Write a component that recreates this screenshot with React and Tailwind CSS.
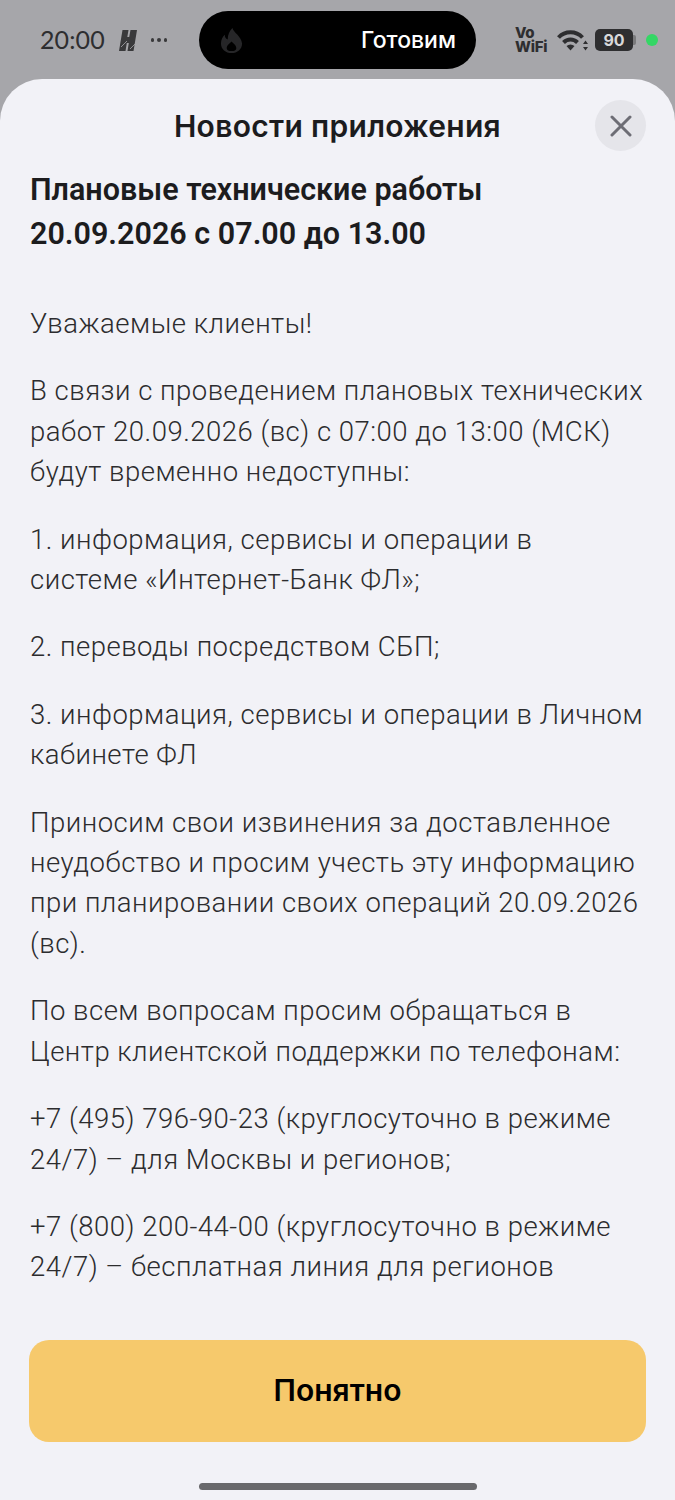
const paragraphs = [
  ["В связи с проведением плановых технических", "работ 20.09.2026 (вс) с 07:00 до 13:00 (МСК)", "будут временно недоступны:"],
  ["1. информация, сервисы и операции в", "системе «Интернет-Банк ФЛ»;"],
  ["2. переводы посредством СБП;"],
  ["3. информация, сервисы и операции в Личном", "кабинете ФЛ"],
  ["Приносим свои извинения за доставленное", "неудобство и просим учесть эту информацию", "при планировании своих операций 20.09.2026", "(вс)."],
  ["По всем вопросам просим обращаться в", "Центр клиентской поддержки по телефонам:"],
  ["+7 (495) 796-90-23 (круглосуточно в режиме", "24/7) – для Москвы и регионов;"],
  ["+7 (800) 200-44-00 (круглосуточно в режиме", "24/7) – бесплатная линия для регионов"],
];

function StatusBar() {
  return (
    <div className="h-[79px] flex items-start pt-[11px] pl-[40px] text-[#2e2e30]">
      <div className="flex items-center h-[58px] w-[159px]">
        <span className="text-[25px] font-normal tracking-[0.1px]" style={{ fontFamily: "Lato, sans-serif" }}>20:00</span>
        <svg width="18" height="21" viewBox="0 0 18 21" className="ml-[14px]">
          <path d="M3.500 0H9.500L8.300 7h1.900L11.500 0H18l-3.500 21H8.500l1.300-8H7.800L6.500 21H0z" fill="#39393b" />
          <path d="M2 17L8 11M11 19L16 14" stroke="#a6a6aa" strokeWidth="0.8" />
        </svg>
        <span className="ml-[14px] flex gap-[3px]">
          <span className="w-[3.500px] h-[3.500px] rounded-full bg-[#39393b]" />
          <span className="w-[3.500px] h-[3.500px] rounded-full bg-[#39393b]" />
          <span className="w-[3.500px] h-[3.500px] rounded-full bg-[#39393b]" />
        </span>
      </div>
      <div className="w-[277px] h-[58px] bg-black rounded-full flex items-center justify-between pl-[21px] pr-[20px]">
        <svg width="24" height="27" viewBox="0 0 25 28">
          <path d="M13 1c1 5 9 8 10 16 0 6-5 10-11 10S1 23 1 17c0-4 2-7 4-9 0 3 1 4 3 5 0-5 2-9 5-12zm-1 14c-2 2-5 4-5 7 0 2 2 3 5 3s5-1 5-3c0-3-3-5-5-7z" fill="#262628" fillRule="evenodd" />
        </svg>
        <span className="text-white text-[23px] font-medium" style={{ fontFamily: "Inter, sans-serif" }}>Готовим</span>
      </div>
      <div className="flex items-center h-[58px] ml-[39px]" style={{ fontFamily: "Inter, sans-serif" }}>
        <div className="text-[#2e2e30] text-[15px] leading-[14px] font-extrabold tracking-[-0.2px] w-[35px]">
          <div>Vo</div>
          <div>WiFi</div>
        </div>
        <svg width="32" height="23" viewBox="0 0 32 23" className="ml-[7px]">
          <path d="M1.500 8.500C8 1.500 19 1.500 25.500 8.500" fill="none" stroke="#2e2e30" strokeWidth="4" />
          <path d="M6.500 13.500C10.500 9.500 16.500 9.500 20.500 13.500" fill="none" stroke="#2e2e30" strokeWidth="4" />
          <path d="M9.500 17C12 15 15 15 17.500 17L13.500 21.500z" fill="#2e2e30" />
          <path d="M28.500 11.500l2.500 3.500h-5zM28.500 21.500l2.500-3.500h-5z" fill="#2e2e30" />
        </svg>
        <div className="ml-[6px] w-[38px] h-[22px] rounded-[5px] bg-[#2e2e30] text-[#d8d8da] text-[16px] font-bold flex items-center justify-center">
          90
        </div>
        <div className="w-[3px] h-[10px] bg-[#7a7a7c] rounded-r-[2px]" />
        <div className="ml-[10px] w-[12px] h-[12px] rounded-full bg-[#34d765]" />
      </div>
    </div>
  );
}

export default function App() {
  return (
    <div className="w-[675px] h-[1500px] bg-[#a6a6aa] overflow-hidden flex flex-col" style={{ fontFamily: 'Roboto, "Noto Sans", sans-serif' }}>
      <StatusBar />
      <div className="flex-1 bg-[#f2f2f7] rounded-t-[42px] flex flex-col px-[29px]">
        <div className="relative h-[94px] flex items-center justify-center">
          <span className="text-[30px] font-semibold text-[#1c1c1e] tracking-[0.3px]" style={{ fontFamily: "Inter, sans-serif" }}>Новости приложения</span>
          <div className="absolute right-0 top-[21px] w-[51px] h-[51px] rounded-full bg-[#e5e5ea] flex items-center justify-center">
            <svg width="22" height="22" viewBox="0 0 22 22">
              <path d="M2 2l18 18M20 2L2 20" stroke="#6d6d75" strokeWidth="3" strokeLinecap="round" />
            </svg>
          </div>
        </div>
        <h1 className="text-[30.500px] leading-[43.500px] font-semibold text-[#1c1c1e] -mt-[5px] ml-px">
          Плановые технические работы
          <br />
          20.09.2026 с 07.00 до 13.00
        </h1>
        <div className="mt-[49px] ml-px flex flex-col gap-[27px] text-[27.500px] leading-[40.400px] font-light text-[#2c2c2e] tracking-[0.5px]">
          <p>Уважаемые клиенты!</p>
          {paragraphs.map((lines, i) => (
            <p key={i}>
              {lines.map((line, j) => (
                <span key={j} className="block whitespace-nowrap">{line}</span>
              ))}
            </p>
          ))}
        </div>
        <button className="mt-[52px] h-[102px] rounded-[20px] bg-[#f6c96c] text-black text-[30px] font-semibold" style={{ fontFamily: "Inter, sans-serif" }}>
          Понятно
        </button>
        <div className="mt-[41px] mx-auto w-[278px] h-[7px] rounded-full bg-[#69696c]" />
      </div>
    </div>
  );
}
